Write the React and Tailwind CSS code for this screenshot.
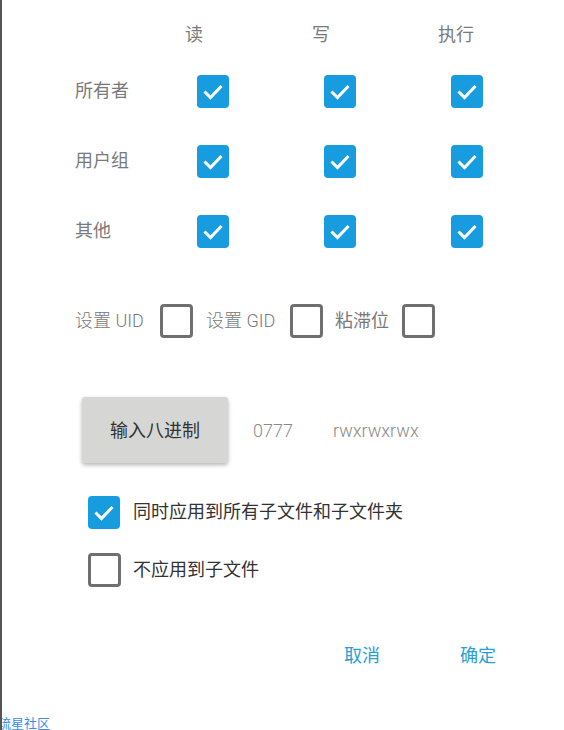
const FONT = { fontFamily: 'Roboto, "Noto Sans CJK SC", sans-serif' }

function Check({ checked, className = '' }) {
  if (checked) {
    return (
      <span className={`flex items-center justify-center w-[32px] h-[33px] rounded-[4px] bg-[#179ddf] shrink-0 ${className}`}>
        <svg viewBox="0 0 24 24" className="w-[24px] h-[24px]" fill="none" stroke="white" strokeWidth="3" strokeLinecap="square">
          <path d="M4.5 12.5l5 5L19.5 7" />
        </svg>
      </span>
    )
  }
  return (
    <span className={`block w-[33px] h-[34px] rounded-[4px] border-[3px] border-[#6f6f6f] shrink-0 ${className}`} />
  )
}

const ROWS = ['所有者', '用户组', '其他']

export default function App() {
  return (
    <div className="relative w-[564px] h-[730px] bg-white border-l-2 border-[#555] overflow-hidden" style={FONT}>
      <div className="pl-[73px] text-[18px] text-[#7a7a7a]">
        {/* column headers */}
        <div className="flex mt-[23px] h-6 leading-6">
          <span className="w-[110px]" />
          <span className="w-[127px]">读</span>
          <span className="w-[126px]">写</span>
          <span>执行</span>
        </div>

        {/* permission rows */}
        {ROWS.map((r, i) => (
          <div key={r} className={`flex items-center h-[33px] ${i === 0 ? 'mt-[28px]' : 'mt-[37px]'}`}>
            <span className="w-[122px] leading-6 -mt-[2px]">{r}</span>
            <Check checked />
            <Check checked className="ml-[95px]" />
            <Check checked className="ml-[95px]" />
          </div>
        ))}

        {/* special bits */}
        <div className="flex items-center h-[34px] mt-[56px]">
          <span className="w-[85px] leading-6 font-light">设置 UID</span>
          <Check />
          <span className="w-[84px] ml-[13px] leading-6 font-light">设置 GID</span>
          <Check />
          <span className="w-[67px] ml-[12px] leading-6">粘滞位</span>
          <Check />
        </div>

        {/* octal */}
        <div className="flex items-center mt-[59px] ml-[7px]">
          <button className="w-[146px] h-[66px] rounded-[3px] bg-[#d6d7d5] text-[#333] text-[18px] shadow-[0_2px_4px_rgba(0,0,0,0.3)]">
            输入八进制
          </button>
          <span className="ml-[25px] w-[80px] text-[#8a8a8a] font-light">0777</span>
          <span className="text-[#8a8a8a] font-light">rwxrwxrwx</span>
        </div>

        {/* recursive options */}
        <div className="flex items-center mt-[33px] ml-[13px] h-[33px]">
          <Check checked />
          <span className="ml-[13px] text-[#333] -mt-[2px]">同时应用到所有子文件和子文件夹</span>
        </div>
        <div className="flex items-center mt-[24px] ml-[13px] h-[34px]">
          <Check />
          <span className="ml-[12px] text-[#333] -mt-[2px]">不应用到子文件</span>
        </div>

        {/* actions */}
        <div className="flex mt-[57px] h-6 leading-6 text-[#27a0d3]">
          <span className="ml-[269px]">取消</span>
          <span className="ml-[80px]">确定</span>
        </div>
      </div>

      <div className="mt-[49px] ml-[-4px] text-[13px] leading-[14px] text-[#3b8de8]">琉星社区</div>
    </div>
  )
}
